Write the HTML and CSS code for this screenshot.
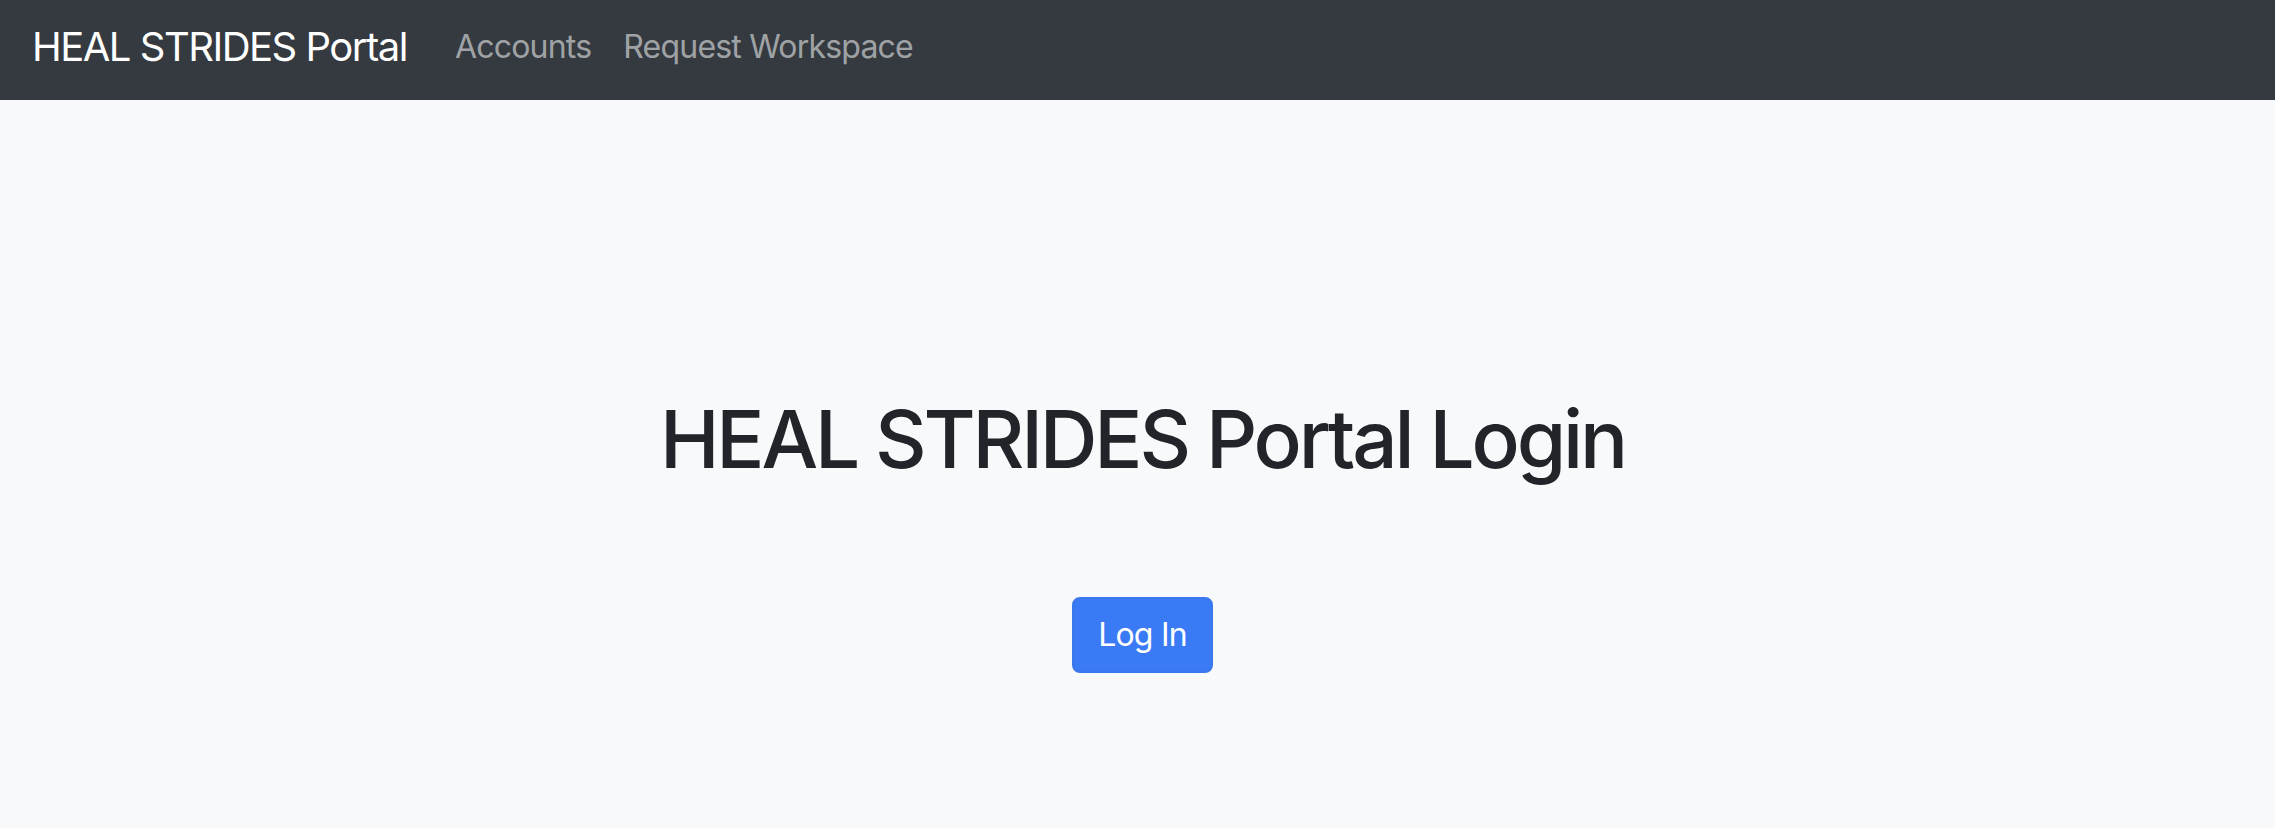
FILE: index.html
```html
<!DOCTYPE html>
<html lang="en">
<head>
<meta charset="utf-8">
<title>HEAL STRIDES Portal</title>
<link rel="stylesheet" href="styles.css">
</head>
<body>
<nav class="navbar">
  <a class="brand" href="#">HEAL STRIDES Portal</a>
  <ul class="nav">
    <li><a class="nav-link" href="#">Accounts</a></li>
    <li><a class="nav-link" href="#">Request Workspace</a></li>
  </ul>
</nav>
<main class="main">
  <h1 class="title">HEAL STRIDES Portal Login</h1>
  <button class="btn" type="button">Log In</button>
</main>
</body>
</html>
```
FILE: styles.css
```css
* { box-sizing: border-box; }
html, body { margin: 0; padding: 0; }
body {
  background: #f8f9fa;
  color: #212529;
  font-family: Inter, "Noto Sans", sans-serif;
  min-height: 828px;
}
.navbar {
  height: 100px;
  background: #343a40;
  display: flex;
  align-items: center;
  padding: 0 32px 6px;
}
.brand {
  color: #fff;
  font-size: 40px;
  line-height: 60px;
  letter-spacing: -1.5px;
  text-decoration: none;
  margin-right: 32px;
}
.nav {
  list-style: none;
  margin: 0;
  padding: 0;
  display: flex;
}
.nav-link {
  display: block;
  color: rgba(255, 255, 255, 0.55);
  font-size: 32px;
  line-height: 48px;
  letter-spacing: -0.8px;
  padding: 16px 16px;
  text-decoration: none;
}
.main {
  display: flex;
  flex-direction: column;
  align-items: center;
  padding: 291px 0 0 10px;
}
.title {
  margin: 0;
  font-size: 80px;
  font-weight: 500;
  line-height: 96px;
  letter-spacing: -3.2px;
}
.btn {
  margin-top: 110px;
  font-family: inherit;
  font-size: 32px;
  line-height: 48px;
  letter-spacing: -0.8px;
  padding: 12px 24px;
  color: #fff;
  background: #3a7bf5;
  border: 2px solid #3a76ec;
  border-radius: 8px;
}
```
